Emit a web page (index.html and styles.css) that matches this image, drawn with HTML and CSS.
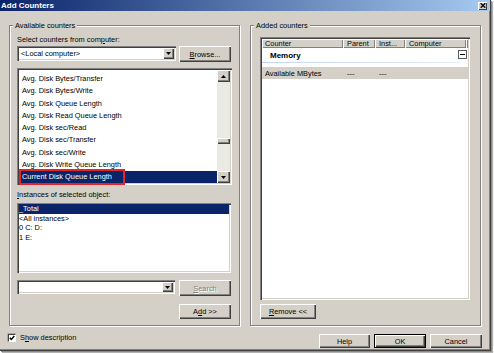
FILE: index.html
```html
<!DOCTYPE html>
<html>
<head>
<meta charset="utf-8">
<title>Add Counters</title>
<link rel="stylesheet" href="styles.css">
</head>
<body>
<div class="window">
  <div class="titlebar">
    <span class="title">Add Counters</span>
    <span class="close"><svg width="6" height="5" viewBox="0 0 6 5"><path d="M0.7 0.3 L5.3 4.7 M5.3 0.3 L0.7 4.7" stroke="#000" stroke-width="1.4"/></svg></span>
  </div>
  <div class="content">
    <div class="groups">
      <div class="group group-left">
        <span class="legend">Available counters</span>
        <div class="label">Select counters from com<u>p</u>uter:</div>
        <div class="row">
          <div class="combo combo-a">
            <span class="combo-text">&lt;Local computer&gt;</span>
            <span class="drop"><svg width="5" height="3" viewBox="0 0 5 3"><path d="M0 0 H5 L2.5 3 Z" fill="#000"/></svg></span>
          </div>
          <button class="btn browse"><u>B</u>rowse...</button>
        </div>
        <div class="listbox counters">
          <div class="items">
            <div class="item">Avg. Disk Bytes/Transfer</div>
            <div class="item">Avg. Disk Bytes/Write</div>
            <div class="item">Avg. Disk Queue Length</div>
            <div class="item">Avg. Disk Read Queue Length</div>
            <div class="item">Avg. Disk sec/Read</div>
            <div class="item">Avg. Disk sec/Transfer</div>
            <div class="item">Avg. Disk sec/Write</div>
            <div class="item">Avg. Disk Write Queue Length</div>
            <div class="item sel">Current Disk Queue Length</div>
          </div>
          <div class="vscroll">
            <span class="sb-btn"><svg width="5" height="3" viewBox="0 0 5 3"><path d="M2.5 0 L5 3 H0 Z" fill="#000"/></svg></span>
            <div class="sb-track"><span class="sb-thumb"></span></div>
            <span class="sb-btn"><svg width="5" height="3" viewBox="0 0 5 3"><path d="M0 0 H5 L2.5 3 Z" fill="#000"/></svg></span>
          </div>
          <div class="redbox"></div>
        </div>
        <div class="label label-inst"><u>I</u>nstances of selected object:</div>
        <div class="listbox instances">
          <div class="inst sel">_Total</div>
          <div class="inst">&lt;All instances&gt;</div>
          <div class="inst">0 C: D:</div>
          <div class="inst">1 E:</div>
        </div>
        <div class="search-grid">
          <div class="combo combo-b">
            <span class="combo-text"></span>
            <span class="drop"><svg width="5" height="3" viewBox="0 0 5 3"><path d="M0 0 H5 L2.5 3 Z" fill="#000"/></svg></span>
          </div>
          <button class="btn search" disabled><u>S</u>earch</button>
          <button class="btn add">A<u>d</u>d &gt;&gt;</button>
        </div>
      </div>
      <div class="group group-right">
        <span class="legend">Added counters</span>
        <div class="listview">
          <div class="lv-head">
            <span class="col c1">Counter</span>
            <span class="col c2">Parent</span>
            <span class="col c3">Inst...</span>
            <span class="col c4">Computer</span>
            <span class="col c5"></span>
          </div>
          <div class="grp-row">
            <span class="grp-name">Memory</span>
            <span class="minus"></span>
          </div>
          <div class="grp-line"></div>
          <div class="lv-row">
            <span class="cell c1">Available MBytes</span>
            <span class="cell c2">---</span>
            <span class="cell c3">---</span>
          </div>
        </div>
        <button class="btn remove"><u>R</u>emove &lt;&lt;</button>
      </div>
    </div>
    <div class="bottom">
      <div class="check">
        <span class="cb"><svg width="6" height="6" viewBox="0 0 6 6"><path d="M0.8 2.8 L2.3 4.4 L5.3 1" stroke="#000" stroke-width="1.4" fill="none"/></svg></span>
        <span class="cb-label">S<u>h</u>ow description</span>
      </div>
      <div class="buttons">
        <button class="btn help">Help</button>
        <button class="btn ok">OK</button>
        <button class="btn cancel">Cancel</button>
      </div>
    </div>
  </div>
</div>
</body>
</html>
```

FILE: styles.css
```css
* { box-sizing: border-box; }
html, body { margin: 0; padding: 0; }
body {
  width: 494px;
  height: 353px;
  overflow: hidden;
  background: #fff;
  font-family: "Liberation Sans", Arial, sans-serif;
  font-size: 7.4px;
  color: #000;
}
u { text-decoration: underline; text-underline-offset: 1px; }

.window {
  width: 491px;
  height: 351px;
  background: #d4d0c8;
  border-right: 1px solid #404040;
  border-bottom: 1px solid #404040;
  box-shadow: inset -1px -1px 0 #808080, 1px 1px 0 #8a8a8a, 2px 2px 1px rgba(0,0,0,0.3);
  display: flex;
  flex-direction: column;
}

.titlebar {
  height: 11px;
  background: linear-gradient(to right, #0a246a, #a6caf0);
  display: flex;
  align-items: center;
  justify-content: space-between;
  padding: 0 3px 0 1px;
}
.title {
  color: #fff;
  font-weight: bold;
  font-size: 8px;
  line-height: 11px;
}
.close {
  width: 9px;
  height: 8px;
  background: #d4d0c8;
  box-shadow: inset 1px 1px 0 #fff, inset -1px -1px 0 #404040;
  display: flex;
  align-items: center;
  justify-content: center;
}
.close svg { display: block; }

.content {
  flex: 1;
  padding: 14px 8px 0 9px;
  display: flex;
  flex-direction: column;
}
.groups { display: flex; gap: 10px; }

.group {
  position: relative;
  width: 231px;
  height: 301px;
  border: 1px solid #808080;
  box-shadow: 1px 1px 0 #fff, inset 1px 1px 0 #fff;
}
.group-left { padding: 9px 0 0 7px; }
.group-right { padding: 11px 0 0 9px; }

.legend {
  position: absolute;
  top: -5px;
  left: 3px;
  padding: 0 2px;
  background: #d4d0c8;
  line-height: 9px;
  white-space: nowrap;
}

.label { line-height: 9px; height: 9px; white-space: nowrap; }
.label-inst { margin-top: 5px; }

.row { display: flex; align-items: flex-start; margin-top: 2px; }

.sunken, .combo, .listbox, .listview {
  background: #fff;
  box-shadow: inset 1px 1px 0 #808080, inset 2px 2px 0 #404040, inset -1px -1px 0 #fff, inset -2px -2px 0 #d4d0c8;
  padding: 2px;
}

.combo {
  display: flex;
  align-items: stretch;
  height: 15px;
}
.combo-a { width: 159px; }
.combo-b { width: 158px; height: 14px; }
.combo-text {
  flex: 1;
  padding-left: 2px;
  line-height: 11px;
  white-space: nowrap;
}
.drop {
  width: 11px;
  background: #d4d0c8;
  box-shadow: inset 1px 1px 0 #fff, inset -1px -1px 0 #404040, inset -2px -2px 0 #808080;
  display: flex;
  align-items: center;
  justify-content: center;
}
.drop svg { display: block; }

.btn {
  font-family: inherit;
  font-size: 7.4px;
  color: #000;
  background: #d4d0c8;
  border: none;
  padding: 0;
  margin: 0;
  box-shadow: inset 1px 1px 0 #fff, inset -1px -1px 0 #404040, inset -2px -2px 0 #808080;
  white-space: nowrap;
  text-align: center;
}
.browse { width: 52px; height: 16px; margin-left: 3px; }

.listbox { position: relative; }
.counters {
  width: 215px;
  height: 117px;
  margin-top: 6px;
  display: flex;
}
.items {
  flex: 1;
  padding-top: 3px;
  overflow: hidden;
}
.item {
  height: 12.25px;
  line-height: 12.25px;
  padding-left: 3px;
  white-space: nowrap;
}
.sel { background: #0a246a; color: #fff; }

.vscroll {
  width: 13px;
  display: flex;
  flex-direction: column;
  background: #ebe9e4;
}
.sb-btn {
  height: 12px;
  background: #d4d0c8;
  box-shadow: inset 1px 1px 0 #fff, inset -1px -1px 0 #404040, inset -2px -2px 0 #808080;
  display: flex;
  align-items: center;
  justify-content: center;
}
.sb-btn svg { display: block; }
.sb-track { flex: 1; }
.sb-thumb {
  display: block;
  height: 6px;
  margin-top: 56px;
  background: #d4d0c8;
  box-shadow: inset 1px 1px 0 #fff, inset -1px -1px 0 #404040, inset -2px -2px 0 #808080;
}

.redbox {
  position: absolute;
  left: 2px;
  top: 101px;
  width: 106px;
  height: 16px;
  border: 2px solid #e3242b;
}

.instances {
  width: 214px;
  height: 70px;
  margin-top: 4px;
  padding-top: 1px;
}
.inst {
  height: 9.5px;
  line-height: 9.5px;
  white-space: nowrap;
}

.search-grid {
  display: grid;
  grid-template-columns: 158px 52px;
  column-gap: 4px;
  row-gap: 8px;
  margin-top: 7px;
  align-items: start;
}
.search {
  height: 16px;
  color: #808080;
  text-shadow: 1px 1px 0 #fff;
}
.add { grid-column: 2; height: 15px; }

.listview {
  width: 210px;
  height: 263px;
}
.lv-head {
  display: flex;
  height: 9px;
  background: #d4d0c8;
}
.col {
  height: 9px;
  line-height: 9px;
  padding-left: 4px;
  box-shadow: inset 1px 1px 0 #fff, inset -1px -1px 0 #808080;
  white-space: nowrap;
  overflow: hidden;
}
.c1 { width: 81px; }
.lv-head .c1 { padding-left: 3px; }
.c2 { width: 32px; }
.c3 { width: 30px; }
.c4 { width: 61px; }
.c5 { flex: 1; padding: 0; }

.grp-row {
  height: 14px;
  display: flex;
  align-items: center;
  justify-content: space-between;
  padding: 0 1px 0 8px;
}
.grp-name { font-weight: bold; font-size: 8px; }
.minus {
  width: 9px;
  height: 9px;
  border: 1px solid #5a5a5a;
  background: #fff;
  position: relative;
  margin-top: -1px;
}
.minus::after {
  content: "";
  position: absolute;
  left: 1px;
  right: 1px;
  top: 3px;
  height: 1px;
  background: #000;
}
.grp-line {
  height: 1px;
  margin-right: 8px;
  background: linear-gradient(to right, #c3d4ee, #e4ecf8);
}
.lv-row {
  margin-top: 4px;
  height: 12px;
  background: #d4d0c8;
  display: flex;
  align-items: center;
}
.cell { padding-left: 4px; white-space: nowrap; }
.lv-row .c1 { padding-left: 3px; }

.remove { width: 56px; height: 15px; margin-top: 4px; display: block; }

.bottom {
  display: flex;
  justify-content: space-between;
  align-items: flex-start;
  padding-top: 7px;
}
.check {
  display: flex;
  align-items: center;
  margin-left: -1px;
}
.cb {
  width: 8px;
  height: 8px;
  background: #fff;
  border-top: 1px solid #404040;
  border-left: 1px solid #404040;
  border-right: 1px solid #fff;
  border-bottom: 1px solid #fff;
  box-shadow: -0.5px -0.5px 0 #808080;
  display: flex;
  align-items: center;
  justify-content: center;
}
.cb svg { display: block; }
.cb-label { margin-left: 4px; line-height: 9px; }

.buttons {
  display: flex;
  gap: 4px;
  margin-top: 1px;
}
.help { width: 51px; height: 14px; }
.ok {
  width: 52px;
  height: 14px;
  box-shadow: inset 0 0 0 1px #000, inset 2px 2px 0 #fff, inset -2px -2px 0 #404040, inset -3px -3px 0 #808080;
}
.cancel { width: 52px; height: 14px; }
```
